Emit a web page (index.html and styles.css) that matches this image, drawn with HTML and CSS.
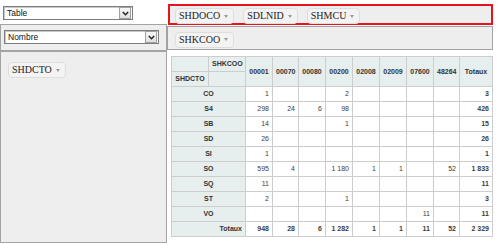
FILE: index.html
```html
<!DOCTYPE html>
<html lang="fr">
<head>
<meta charset="utf-8">
<title>Pivot</title>
<link rel="stylesheet" href="styles.css">
</head>
<body>
<div class="pvt-ui">
  <div class="renderer-cell">
    <div class="sel sel-renderer"><span class="sel-text">Table</span><span class="sel-btn"><svg width="7" height="5" viewBox="0 0 7 5"><path d="M0.8 1 L3.5 3.8 L6.2 1" fill="none" stroke="#222" stroke-width="1.4"/></svg></span></div>
  </div>
  <div class="axis unused">
    <ul class="hlist">
      <li><span class="attr">SHDOCO<span class="tri"></span></span></li>
      <li><span class="attr">SDLNID<span class="tri"></span></span></li>
      <li><span class="attr">SHMCU<span class="tri"></span></span></li>
    </ul>
  </div>
  <div class="axis vals">
    <div class="sel sel-agg"><span class="sel-text">Nombre</span><span class="sel-btn"><svg width="7" height="5" viewBox="0 0 7 5"><path d="M0.8 1 L3.5 3.8 L6.2 1" fill="none" stroke="#222" stroke-width="1.4"/></svg></span></div>
  </div>
  <div class="axis cols">
    <ul class="hlist">
      <li><span class="attr">SHKCOO<span class="tri"></span></span></li>
    </ul>
  </div>
  <div class="axis rows">
    <ul class="vlist">
      <li><span class="attr">SHDCTO<span class="tri"></span></span></li>
    </ul>
  </div>
  <div class="output">
    <table class="pvt-table">
      <colgroup>
        <col class="c-lab"><col class="c-lab">
        <col class="c-d27"><col class="c-d26"><col class="c-d27"><col class="c-d27"><col class="c-d27"><col class="c-d27"><col class="c-d27"><col class="c-d26">
        <col class="c-tot">
      </colgroup>
      <thead>
        <tr>
          <th></th>
          <th>SHKCOO</th>
          <th rowspan="2">00001</th>
          <th rowspan="2">00070</th>
          <th rowspan="2">00080</th>
          <th rowspan="2">00200</th>
          <th rowspan="2">02008</th>
          <th rowspan="2">02009</th>
          <th rowspan="2">07600</th>
          <th rowspan="2">48264</th>
          <th rowspan="2">Totaux</th>
        </tr>
        <tr>
          <th>SHDCTO</th>
          <th></th>
        </tr>
      </thead>
      <tbody>
        <tr><th colspan="2">CO</th><td>1</td><td></td><td></td><td>2</td><td></td><td></td><td></td><td></td><td class="total">3</td></tr>
        <tr><th colspan="2">S4</th><td>298</td><td>24</td><td>6</td><td>98</td><td></td><td></td><td></td><td></td><td class="total">426</td></tr>
        <tr><th colspan="2">SB</th><td>14</td><td></td><td></td><td>1</td><td></td><td></td><td></td><td></td><td class="total">15</td></tr>
        <tr><th colspan="2">SD</th><td>26</td><td></td><td></td><td></td><td></td><td></td><td></td><td></td><td class="total">26</td></tr>
        <tr><th colspan="2">SI</th><td>1</td><td></td><td></td><td></td><td></td><td></td><td></td><td></td><td class="total">1</td></tr>
        <tr><th colspan="2">SO</th><td>595</td><td>4</td><td></td><td>1 180</td><td>1</td><td>1</td><td></td><td>52</td><td class="total">1 833</td></tr>
        <tr><th colspan="2">SQ</th><td>11</td><td></td><td></td><td></td><td></td><td></td><td></td><td></td><td class="total">11</td></tr>
        <tr><th colspan="2">ST</th><td>2</td><td></td><td></td><td>1</td><td></td><td></td><td></td><td></td><td class="total">3</td></tr>
        <tr><th colspan="2">VO</th><td></td><td></td><td></td><td></td><td></td><td></td><td>11</td><td></td><td class="total">11</td></tr>
        <tr><th colspan="2" class="total-label">Totaux</th><td class="total">948</td><td class="total">28</td><td class="total">6</td><td class="total">1 282</td><td class="total">1</td><td class="total">1</td><td class="total">11</td><td class="total">52</td><td class="total">2 329</td></tr>
      </tbody>
    </table>
  </div>
</div>
</body>
</html>
```

FILE: styles.css
```css
* { box-sizing: border-box; }
html, body { margin: 0; padding: 0; background: #fff; }
body {
  font-family: "Liberation Serif", "Times New Roman", serif;
  color: #333;
  width: 500px;
  height: 245px;
  overflow: hidden;
}

.pvt-ui {
  display: grid;
  grid-template-columns: 167px 326px;
  grid-template-rows: 24px 27px 192px;
}

/* selects */
.renderer-cell { padding: 6px 0 0 3px; }
.sel {
  display: flex;
  height: 14px;
  background: #fff;
  border: 1px solid #7d7d7d;
  box-shadow: inset 1px 1px 0 #c8c8c8;
  font-family: "Liberation Sans", Arial, sans-serif;
  font-size: 8.5px;
  color: #111;
}
.sel-renderer { width: 130px; }
.sel-agg { width: 155px; }
.sel-text { flex: 1; padding-left: 3px; line-height: 12px; }
.sel-btn {
  width: 12px;
  margin: 0 1px 0 0;
  border: 1px solid #a0a0a0;
  background: linear-gradient(#f8f8f8, #dedede);
  display: flex;
  align-items: center;
  justify-content: center;
}

/* axis containers */
.axis {
  background: #eee;
  border: 1px solid #a3a3a3;
}
.unused {
  margin: 4px 0 0 1px;
  height: 21px;
  border: 2px solid #e8141b;
  padding-left: 5px;
  display: flex;
  align-items: center;
}
.vals { padding: 5px 0 0 3px; }
.cols {
  margin-top: 2px;
  height: 24px;
  padding-left: 7px;
  display: flex;
  align-items: center;
}
.rows { padding: 7px 0 0 7px; }

.hlist, .vlist { list-style: none; margin: 0; padding: 0; }
.hlist { display: flex; gap: 9px; }

.attr {
  display: inline-flex;
  align-items: center;
  background: #f3f3f3;
  border: 1px solid #dedede;
  border-radius: 4px;
  padding: 1px 5px 1px 3px;
  font-size: 10px;
  line-height: 12px;
  color: #222;
  white-space: nowrap;
}
.tri {
  width: 0;
  height: 0;
  border-left: 2px solid transparent;
  border-right: 2px solid transparent;
  border-top: 3px solid #9a9a9a;
  margin-left: 4px;
}

/* output table */
.output { padding: 5px 0 0 4px; }
.pvt-table {
  border-collapse: collapse;
  table-layout: fixed;
  width: 321px;
  font-family: "Liberation Sans", Arial, sans-serif;
  font-size: 7px;
  line-height: 8px;
}
.c-lab { width: 37px; }
.c-d27 { width: 27px; }
.c-d26 { width: 26px; }
.c-tot { width: 33px; }
.pvt-table th {
  background: #e6eeee;
  border: 1px solid #cdcdcd;
  padding: 3px;
  font-weight: bold;
  color: #333;
  text-align: center;
  white-space: nowrap;
}
.pvt-table td {
  background: #fff;
  border: 1px solid #cdcdcd;
  padding: 3px;
  text-align: right;
  color: #3d3d3d;
  white-space: nowrap;
}
.pvt-table .total { font-weight: bold; }
.pvt-table .total-label { text-align: right; }
```
